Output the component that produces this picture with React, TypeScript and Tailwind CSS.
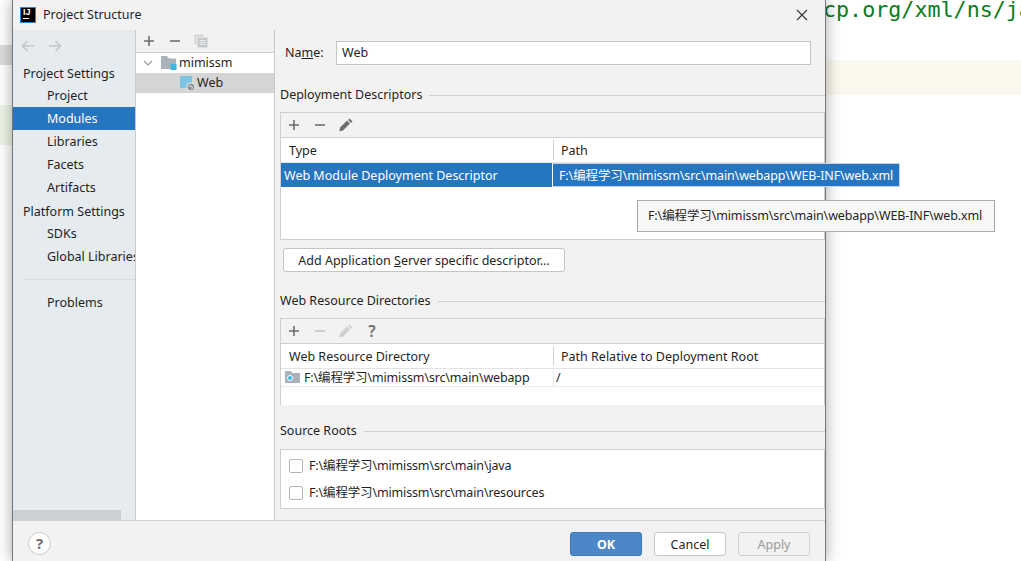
import type { ReactNode } from "react";

const uiFont = "font-['Noto_Sans','Noto_Sans_CJK_SC',sans-serif]";

function PlusIcon({ muted }: { muted?: boolean }) {
  return (
    <svg width="16" height="16" viewBox="0 0 16 16">
      <path d="M8 3v10M3 8h10" stroke={muted ? "#c4c4c4" : "#6e6e6e"} strokeWidth="1.6" />
    </svg>
  );
}

function MinusIcon({ muted }: { muted?: boolean }) {
  return (
    <svg width="16" height="16" viewBox="0 0 16 16">
      <path d="M3 8h10" stroke={muted ? "#c4c4c4" : "#6e6e6e"} strokeWidth="1.6" />
    </svg>
  );
}

function PencilIcon({ muted }: { muted?: boolean }) {
  return (
    <svg width="16" height="16" viewBox="0 0 16 16">
      <path
        d="M11.5 1.5l3 3-1.4 1.4-3-3zM9 3.5l3 3-7 7-3.6.8.6-3.8z"
        fill={muted ? "#cfcfcf" : "#6e6e6e"}
      />
    </svg>
  );
}

function QuestionGlyph() {
  return <span className="w-4 text-center text-[16px] leading-4 font-semibold text-[#6e6e6e]">?</span>;
}

function Arrow({ flip }: { flip?: boolean }) {
  return (
    <svg width="16" height="16" viewBox="0 0 16 16" className={flip ? "rotate-180" : ""}>
      <path d="M14 8H2.5M7.5 3L2.5 8l5 5" fill="none" stroke="#c2c6ca" strokeWidth="1.6" />
    </svg>
  );
}

function CopyIcon() {
  return (
    <svg width="16" height="16" viewBox="0 0 16 16">
      <path d="M1.5 1.5h9v2h-7v8h-2z" fill="#d0d3d6" />
      <path d="M4.5 4.5h10v10h-10z" fill="#c4c8cb" />
      <path d="M6.5 7.5h6M6.5 9.5h6M6.5 11.5h6" stroke="#e9ecef" strokeWidth="1" />
    </svg>
  );
}

function FolderIcon() {
  return (
    <svg width="16" height="16" viewBox="0 0 16 16">
      <path d="M0 1h6l2 2.500h7v10.500H0z" fill="#aab3bb" />
      <path d="M9.500 9h6v6h-6z" fill="#40b6e0" />
    </svg>
  );
}

function WebModuleIcon() {
  return (
    <svg width="16" height="16" viewBox="0 0 16 16">
      <path d="M0 1h12v12H0z" fill="#7fc4de" />
      <circle cx="11" cy="12" r="4.500" fill="#f2f2f2" />
      <circle cx="11" cy="12" r="3.500" fill="#8a9299" />
      <path d="M9 11h2.500l1 2-1 1.500" fill="none" stroke="#e4e8eb" strokeWidth="1" />
    </svg>
  );
}

function WebFolderIcon() {
  return (
    <svg width="16" height="16" viewBox="0 0 16 16">
      <path d="M0 1h6l1.500 2h7.500v10H0z" fill="#aab3bb" />
      <circle cx="5" cy="8" r="2.500" fill="#38b4e6" stroke="#fff" strokeWidth="1" />
    </svg>
  );
}

function NavItem({ label, active }: { label: string; active?: boolean }) {
  return (
    <div
      className={`h-[23px] overflow-hidden pl-[34px] leading-[24px] whitespace-nowrap ${
        active ? "bg-[#2675bf] text-white" : "text-[#1f1f1f]"
      }`}
    >
      {label}
    </div>
  );
}

function NavHeading({ label }: { label: string }) {
  return <div className="h-[22px] pl-[10px] leading-[24px] text-[#1f1f1f]">{label}</div>;
}

function SectionTitle({ children }: { children: ReactNode }) {
  return (
    <div className="flex h-[18px] items-center gap-[7px] text-[#1f1f1f]">
      <span className="whitespace-nowrap">{children}</span>
      <div className="h-px flex-1 bg-[#cfcfcf]" />
    </div>
  );
}

function Toolbar({ children }: { children: ReactNode }) {
  return (
    <div className="flex h-[25px] items-center gap-[10px] border-b border-[#cfcfcf] pl-[5px]">{children}</div>
  );
}

function ColumnHeader({ left, right }: { left: string; right: string }) {
  return (
    <div className="flex h-[25px] border-b border-[#e3e3e3] bg-white leading-[25px] text-[#1f1f1f]">
      <div className="w-[272px] shrink-0 pl-2">{left}</div>
      <div className="my-[2px] w-px bg-[#d4d4d4]" />
      <div className="pl-[7px]">{right}</div>
    </div>
  );
}

function RootRow({ label }: { label: string }) {
  return (
    <div className="flex h-[27px] items-center gap-[6px] pl-2 text-[#1f1f1f]">
      <div className="h-[14px] w-[14px] rounded-[2px] border border-[#b5b5b5] bg-white" />
      <span className="pt-[2px] tracking-[-0.15px]">{label}</span>
    </div>
  );
}

function DialogButton({ children, kind }: { children: ReactNode; kind: "ok" | "plain" | "off" }) {
  const look =
    kind === "ok"
      ? "border-[#3f79b4] bg-[#4c87c8] font-bold text-white"
      : kind === "plain"
        ? "border-[#c4c4c4] bg-white text-[#1f1f1f]"
        : "border-[#d2d2d2] bg-[#f2f2f2] text-[#999999]";
  return (
    <button className={`h-6 w-[72px] rounded-[3px] border text-center leading-[24px] ${look}`}>{children}</button>
  );
}

export default function App() {
  const cnPath = "F:\\编程学习\\mimissm\\src\\main";

  return (
    <div className={`relative h-[561px] w-[1021px] overflow-hidden bg-white text-[12.5px] ${uiFont}`}>
      {/* editor behind the dialog */}
      <div className="absolute top-[45px] left-0 h-5 w-3 bg-[#dcdcdc]" />
      <div className="absolute top-[105px] left-0 h-10 w-3 bg-[#eef5e6]" />
      <div className="absolute top-[60px] left-[826px] h-[35px] w-[195px] bg-[#fbf9ee]" />
      <div className="absolute top-[-6px] left-[823px] font-['DejaVu_Sans_Mono',monospace] text-[21.7px] whitespace-nowrap text-[#0a7d1c]">
        cp.org/xml/ns/ja
      </div>

      {/* dialog window */}
      <div className="absolute top-0 left-3 flex h-[561px] w-[814px] flex-col border-x border-x-[#777777] bg-[#f2f2f2] shadow-[0_0_14px_rgba(0,0,0,0.35)]">
        <div className="flex h-[30px] shrink-0 items-center pr-[17px] pl-[7px]">
          <div className="flex h-4 w-4 flex-col border border-[#2f86d8] bg-black pl-[2px] font-['Liberation_Sans',sans-serif] text-[9px] leading-[9px] font-bold text-white">
            IJ
            <div className="mt-[1px] h-px w-[6px] bg-white" />
          </div>
          <span className="ml-[7px] text-[#1f1f1f]">Project Structure</span>
          <svg width="12" height="12" viewBox="0 0 12 12" className="ml-auto">
            <path d="M1 1l10 10M11 1L1 11" stroke="#333333" strokeWidth="1.100" />
          </svg>
        </div>

        <div className="flex min-h-0 flex-1 border-b border-[#cfcfcf]">
          {/* settings nav */}
          <div className="relative flex w-[123px] shrink-0 flex-col border-r border-[#c9c9c9] bg-[#e6ebf0]">
            <div className="flex h-[32px] items-center gap-[11px] pl-[7px]">
              <Arrow />
              <Arrow flip />
            </div>
            <NavHeading label="Project Settings" />
            <NavItem label="Project" />
            <NavItem label="Modules" active />
            <NavItem label="Libraries" />
            <NavItem label="Facets" />
            <NavItem label="Artifacts" />
            <div className="mt-px">
              <NavHeading label="Platform Settings" />
            </div>
            <NavItem label="SDKs" />
            <NavItem label="Global Libraries" />
            <div className="mt-[11px] mb-[11px] ml-[10px] h-px bg-[#d8dce0]" />
            <NavItem label="Problems" />
            <div className="absolute bottom-0 left-0 h-[10px] w-[108px] bg-[#cbd0d5]" />
          </div>

          {/* module tree */}
          <div className="flex w-[139px] shrink-0 flex-col border-r border-[#c9c9c9] bg-white">
            <div className="flex h-[23px] items-center gap-[10px] border-b border-[#cfcfcf] bg-[#f2f2f2] pl-[5px]">
              <PlusIcon />
              <MinusIcon />
              <CopyIcon />
            </div>
            <div className="flex h-[20px] items-center pl-[6px] text-[#1f1f1f]">
              <svg width="12" height="12" viewBox="0 0 12 12">
                <path d="M2 4l4 4 4-4" fill="none" stroke="#9a9a9a" strokeWidth="1.200" />
              </svg>
              <span className="ml-[7px]">
                <FolderIcon />
              </span>
              <span className="ml-[2px]">mimissm</span>
            </div>
            <div className="flex h-[20px] items-center bg-[#d5d5d5] pl-[44px] text-[#1f1f1f]">
              <WebModuleIcon />
              <span className="ml-[1px]">Web</span>
            </div>
          </div>

          {/* module details */}
          <div className="flex min-w-0 flex-1 flex-col pl-[5px]">
            <div className="mt-[11px] flex h-[24px] shrink-0 items-center pr-[14px] pl-[5px]">
              <span className="w-[51px] text-[#1f1f1f]">
                Na<span className="underline">m</span>e:
              </span>
              <div className="h-[24px] flex-1 border border-[#c4c4c4] bg-white pl-[5px] leading-[21px] text-[#1f1f1f]">
                Web
              </div>
            </div>

            <div className="mt-[21px]">
              <SectionTitle>Deployment Descriptors</SectionTitle>
            </div>
            <div className="mt-[8px] h-[128px] shrink-0 border border-[#cfcfcf]">
              <Toolbar>
                <PlusIcon />
                <MinusIcon />
                <PencilIcon />
              </Toolbar>
              <ColumnHeader left="Type" right="Path" />
              <div className="h-[24px] bg-[#2675bf] pl-[3px] leading-[26px] text-white">
                Web Module Deployment Descriptor
              </div>
              <div className="h-[52px] bg-white" />
            </div>

            <div className="mt-[8px] ml-[3px] h-6 w-[282px] rounded-[3px] border border-[#c4c4c4] bg-white text-center leading-[24px] text-[#1f1f1f]">
              Add Application <span className="underline">S</span>erver specific descriptor...
            </div>

            <div className="mt-[20px]">
              <SectionTitle>Web Resource Directories</SectionTitle>
            </div>
            <div className="mt-[8px] h-[87px] shrink-0 border border-[#cfcfcf]">
              <Toolbar>
                <PlusIcon />
                <MinusIcon muted />
                <PencilIcon muted />
                <QuestionGlyph />
              </Toolbar>
              <ColumnHeader left="Web Resource Directory" right="Path Relative to Deployment Root" />
              <div className="flex h-[18px] border-b border-[#ececec] bg-white leading-[17px] text-[#1f1f1f]">
                <div className="flex w-[272px] shrink-0 items-center gap-[3px] pl-1">
                  <WebFolderIcon />
                  <span className="tracking-[-0.15px]">{cnPath}\webapp</span>
                </div>
                <div className="w-px bg-[#e3e3e3]" />
                <div className="pl-[2px]">/</div>
              </div>
              <div className="h-[18px] bg-white" />
            </div>

            <div className="mt-[17px]">
              <SectionTitle>Source Roots</SectionTitle>
            </div>
            <div className="mt-[9px] flex h-[60px] shrink-0 flex-col justify-center border border-[#cfcfcf] bg-white">
              <RootRow label={`${cnPath}\\java`} />
              <RootRow label={`${cnPath}\\resources`} />
            </div>
          </div>
        </div>

        <div className="flex h-[40px] shrink-0 items-start pt-[11px] pr-[15px] pl-[15px]">
          <div className="flex h-[23px] w-[23px] items-center justify-center rounded-full border border-[#c9c9c9] bg-white text-[15px] font-bold text-[#6e6e6e]">
            ?
          </div>
          <div className="ml-auto flex gap-3">
            <DialogButton kind="ok">OK</DialogButton>
            <DialogButton kind="plain">Cancel</DialogButton>
            <DialogButton kind="off">Apply</DialogButton>
          </div>
        </div>
      </div>

      {/* expanded cell and tooltip lie over the dialog edge */}
      <div className="absolute top-[163px] left-[552px] h-[24px] w-[348px] border-y border-r border-y-[#c5d3e6] border-r-[#c5d3e6] bg-[#2675bf] leading-[24px] tracking-[-0.12px] whitespace-nowrap text-white">
        <div className="h-full border-l border-white pl-[6px]">{cnPath}\webapp\WEB-INF\web.xml</div>
      </div>
      <div className="absolute top-[200px] left-[637px] h-[32px] w-[358px] border border-[#aaaaaa] bg-[#f7f7f7] pl-[10px] leading-[29px] tracking-[-0.12px] whitespace-nowrap text-[#1f1f1f]">
        {cnPath}\webapp\WEB-INF\web.xml
      </div>
    </div>
  );
}
